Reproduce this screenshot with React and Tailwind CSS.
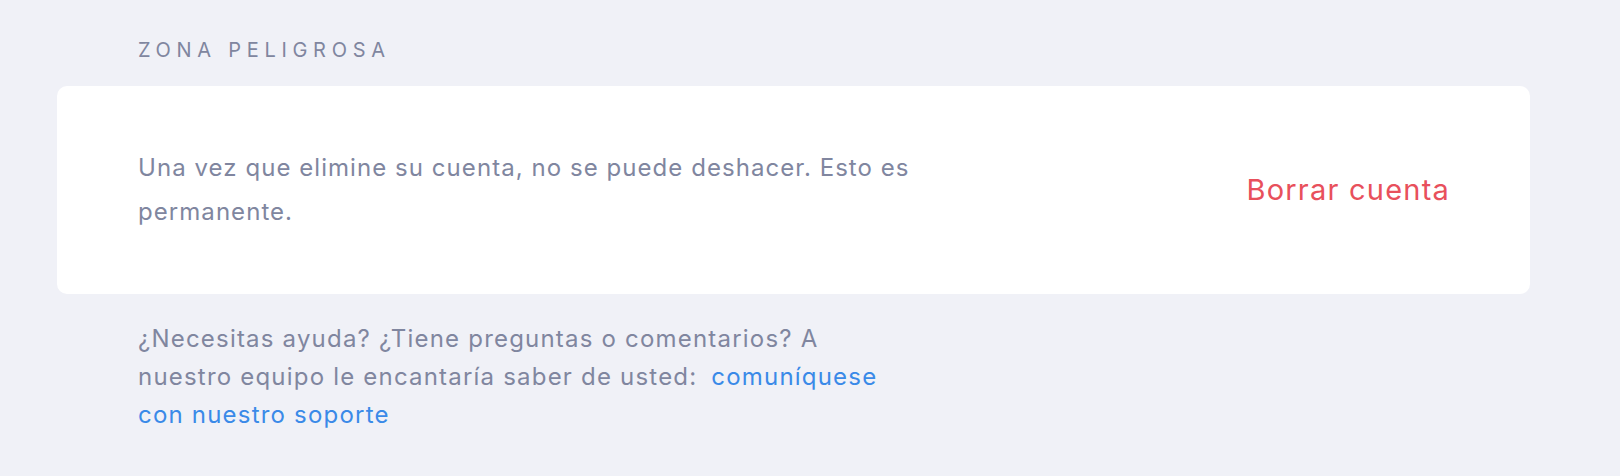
import React from 'react';

const font = { fontFamily: 'Inter, "Liberation Sans", sans-serif' };

const DangerZone = () => {
  return (
    <div className="min-h-[476px] bg-[#f0f1f7] pl-[57px] pr-[90px] pt-[38px]" style={font}>
      {/* Heading */}
      <h2 className="pl-[81px] text-[20px] leading-[24px] tracking-[0.285em] text-[#80869f] uppercase">
        Zona peligrosa
      </h2>

      {/* Card */}
      <div className="mt-[24px] bg-white rounded-[10px] pl-[81px] pr-[80px] py-[60px] flex items-center justify-between">
        <p className="max-w-[800px] text-[24px] leading-[44px] tracking-[0.044em] text-[#80869f]">
          Una vez que elimine su cuenta, no se puede deshacer. Esto es permanente.
        </p>
        <button className="text-[29px] leading-[36px] tracking-[0.042em] text-[#e8505c]">Borrar cuenta</button>
      </div>

      {/* Help */}
      <p className="mt-[26px] pl-[81px] max-w-[840px] text-[24px] leading-[38px] tracking-[0.05em] text-[#80869f]">
        ¿Necesitas ayuda? ¿Tiene preguntas o comentarios? A nuestro equipo le encantaría saber de usted:{' '}
        <a href="#" className="ml-[6px] text-[#3a8ae8]">comuníquese con nuestro soporte</a>
      </p>
    </div>
  );
};

export default DangerZone;
